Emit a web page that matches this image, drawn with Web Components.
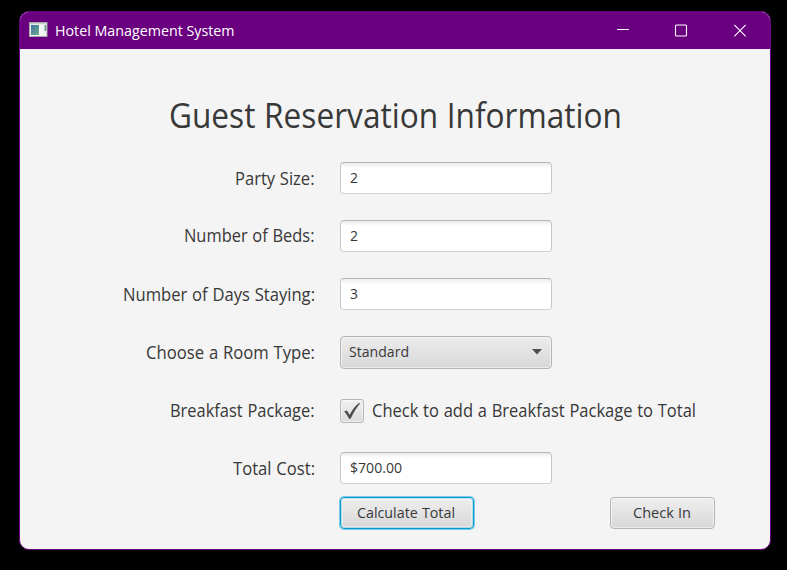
<!DOCTYPE html>
<html lang="en">
<head>
<meta charset="utf-8">
<title>Hotel Management System</title>
<style>
html, body { margin: 0; height: 100%; background: #000; overflow: hidden; }
body { font-family: "Open Sans", "Noto Sans", sans-serif; font-weight: 400; color: #383838; }
</style>
</head>
<body>
<app-window>
  <fit-text slot="title" width="179.5">Hotel Management System</fit-text>
  <reservation-form></reservation-form>
</app-window>
<script>
const define = (name, html, setup) => customElements.define(name, class extends HTMLElement {
  constructor() {
    super();
    this.attachShadow({ mode: "open" }).innerHTML = html;
  }
  connectedCallback() { if (setup) setup(this, this.shadowRoot); }
});

define("window-controls", `<style>
  :host { display: flex; }
  svg { width: 58.5px; height: 38px; fill: none; stroke: #fff; stroke-width: 1.1; }
</style>
<svg viewBox="0 0 58.5 38"><path d="M23 17.5h12" stroke-width="1"/></svg>
<svg viewBox="0 0 58.5 38"><rect x="23.5" y="13" width="11" height="11" rx="1"/></svg>
<svg viewBox="0 0 58.5 38"><path d="M23.3 12.9l11.4 11.4M34.7 12.9L23.3 24.3"/></svg>`);

define("app-icon", `<style>
  :host { display: block; width: 19px; height: 16px; }
  svg { display: block; }
</style>
<svg width="19" height="16" viewBox="0 0 19 16">
  <defs><linearGradient id="g" x1="0" y1="0" x2="1" y2="1"><stop stop-color="#3f70a4"/><stop offset="1" stop-color="#6db08a"/></linearGradient></defs>
  <rect x=".5" y=".5" width="17.5" height="14" fill="#f2f3f3" stroke="#a8aaa9"/>
  <rect x="1" y="1" width="17" height="1.2" fill="#c8cccb"/>
  <rect x="2" y="3" width="8" height="10" fill="url(#g)"/>
  <rect x="15.5" y="3" width="1.8" height="6" fill="#71a096"/>
  <path d="M11 3v11" stroke="#fff"/>
</svg>`);

define("app-window", `<style>
  :host { display: flex; flex-direction: column; box-sizing: border-box; width: 752px; height: 539px;
    margin: 11px 0 0 19px; border: 1px solid #6a007f; border-radius: 10px; background: #f4f4f4; overflow: hidden; }
  header { display: flex; align-items: center; height: 37px; flex: none; padding-left: 9px; gap: 7px;
    background: #6a007f; color: #fff; font-size: 14.7px; }
  app-icon { margin-bottom: 1px; }
  window-controls { margin-left: auto; margin-right: 1px; }
</style>
<header><app-icon></app-icon><slot name="title"></slot><window-controls></window-controls></header>
<slot></slot>`);

define("text-box", `<style>
  :host { display: flex; align-items: center; box-sizing: border-box; width: 212px; height: 32px; padding: 0 0 1px 8.5px;
    border: 1px solid #c8c8c8; border-top-color: #b5b5b5; border-bottom-color: #d0d0d0; border-radius: 4px;
    background: linear-gradient(#ececec, #fff 5px); font-size: 14.6px; }
</style><slot></slot>`);

define("select-box", `<style>
  :host { display: flex; align-items: center; justify-content: space-between; box-sizing: border-box; width: 212px; height: 33px;
    margin-top: 1px; padding: 0 9px 2px 8px; border: 1px solid #b5b5b5; border-radius: 4px;
    background: linear-gradient(#ececec, #d8d8d8); box-shadow: inset 0 0 0 1px #ffffff80; font-size: 14.6px; }
  svg { display: block; margin-top: 1px; }
</style><slot></slot><svg width="10" height="6"><path d="M0 0h10L5 5.4z" fill="#4e4e4e"/></svg>`);

define("push-button", `<style>
  :host { display: flex; align-items: center; justify-content: center; box-sizing: border-box; height: 32px;
    padding: 0 1px 1px 0; border: 1px solid #b5b5b5; border-radius: 4px;
    background: linear-gradient(#eeeeee, #d8d8d8); box-shadow: inset 0 0 0 1px #ffffff80; font-size: 14.6px; }
  :host([focused]) { padding-right: 2px; border-color: #039ed3; box-shadow: 0 0 0 1px #039ed380, inset 0 0 0 1px #039ed338, inset 0 0 0 2px #ffffff60; }
</style><slot></slot>`);

define("check-box", `<style>
  :host { display: flex; align-items: center; gap: 7.5px; padding-top: 1px; }
  i { display: block; box-sizing: border-box; width: 24px; height: 24px; border: 1px solid #b5b5b5; border-radius: 3px;
    background: linear-gradient(#f0f0f0, #dcdcdc); box-shadow: inset 0 0 0 1px #ffffff80; }
  svg { display: block; }
</style><i><svg width="22" height="22"><path d="M3.2 11.6L5.6 10.4C6.9 11.8 7.7 13.1 8.6 14.9C11.3 9.4 14.3 5.8 18.2 2.7L19 3.4C15.2 7.9 12.2 13.1 9.6 18.8H7.9C6.8 16.1 5.3 13.7 3.2 11.6Z" fill="#4b4b4b"/></svg></i><slot></slot>`);

define("form-row", `<style>
  :host { display: grid; grid-template-columns: 294.5px 1fr; column-gap: 25.5px; align-items: center; height: 58px; }
  .label { display: flex; justify-content: flex-end; font-size: 17.4px; padding-top: 2px; }
  :host([raised]) .label { padding-top: 0; }
  .field { font-size: 17.4px; }
</style><div class="label"><slot name="label"></slot></div><div class="field"><slot></slot></div>`);

define("reservation-form", `<style>
  :host { display: block; word-spacing: .03em; }
  h1 { display: flex; justify-content: center; box-sizing: border-box; height: 100px; margin: 0; padding-top: 42px; font-size: 34.6px; font-weight: inherit; }
  .actions { display: flex; justify-content: space-between; margin: 0 55px 0 320px; }
</style>
<h1><fit-text width="453">Guest Reservation Information</fit-text></h1>
<form-row><fit-text slot="label" width="79.5">Party Size:</fit-text><text-box><fit-text width="8">2</fit-text></text-box></form-row>
<form-row raised><fit-text slot="label" width="130.5">Number of Beds:</fit-text><text-box><fit-text width="8">2</fit-text></text-box></form-row>
<form-row><fit-text slot="label" width="192">Number of Days Staying:</fit-text><text-box><fit-text width="8">3</fit-text></text-box></form-row>
<form-row><fit-text slot="label" width="169">Choose a Room Type:</fit-text><select-box><fit-text width="60">Standard</fit-text></select-box></form-row>
<form-row><fit-text slot="label" width="144.5">Breakfast Package:</fit-text><check-box><fit-text width="324">Check to add a Breakfast Package to Total</fit-text></check-box></form-row>
<form-row><fit-text slot="label" width="82">Total Cost:</fit-text><text-box><fit-text width="52">$700.00</fit-text></text-box></form-row>
<div class="actions">
  <push-button focused style="width:134px"><fit-text width="98">Calculate Total</fit-text></push-button>
  <push-button style="width:105px"><fit-text width="58">Check In</fit-text></push-button>
</div>`);

/* Condenses its text horizontally to the given width. Defined last, so that inherited font sizes are already in place. */
define("fit-text", `<style>
  :host { display: block; white-space: pre; flex: none; line-height: 1.362; }
  span { display: inline-block; vertical-align: top; transform-origin: 0 0; }
</style><span><slot></slot></span>`, (el, root) => {
  const width = parseFloat(el.getAttribute("width"));
  const span = root.querySelector("span");
  const natural = span.getBoundingClientRect().width;
  span.style.transform = `scaleX(${width / natural})`;
  el.style.width = width + "px";
});
</script>
</body>
</html>
